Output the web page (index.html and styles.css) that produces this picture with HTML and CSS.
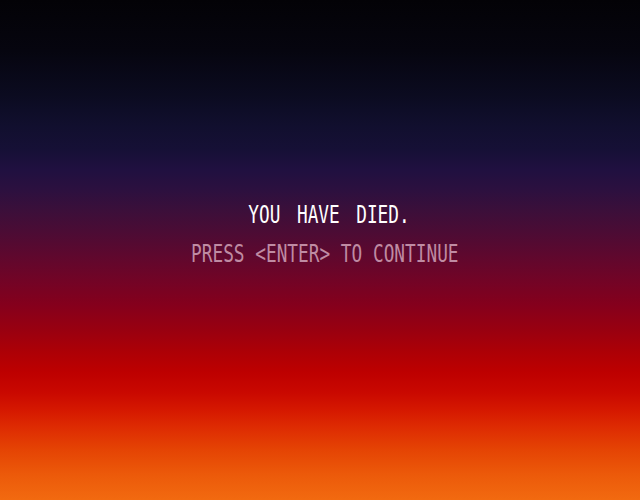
FILE: index.html
```html
<!DOCTYPE html>
<html lang="en">
<head>
<meta charset="utf-8">
<title>You have died</title>
<link rel="stylesheet" href="styles.css">
</head>
<body>
<main class="screen">
  <div class="messages">
    <p class="title">YOU HAVE DIED.</p>
    <p class="prompt">PRESS &lt;ENTER&gt; TO CONTINUE</p>
  </div>
</main>
</body>
</html>
```
FILE: styles.css
```css
html, body {
  margin: 0;
  padding: 0;
  width: 100%;
  height: 100%;
}

body {
  background: #000;
}

.screen {
  width: 640px;
  height: 500px;
  display: flex;
  align-items: center;
  justify-content: center;
  background:
    linear-gradient(to bottom,
      #030206 0px,
      #06050f 50px,
      #0b0b20 95px,
      #110f2e 125px,
      #161036 150px,
      #201040 170px,
      #2c103f 190px,
      #3b0f3a 210px,
      #4a0c35 230px,
      #5e082e 255px,
      #720426 280px,
      #85001c 305px,
      #990010 330px,
      #ad0006 352px,
      #bd0000 372px,
      #c90800 392px,
      #d51800 410px,
      #de2c02 428px,
      #e54404 450px,
      #ec5a0a 475px,
      #f26a10 500px);
}

.messages {
  display: flex;
  flex-direction: column;
  align-items: center;
  gap: 14px;
  padding-bottom: 32px;
  padding-left: 10px;
}

.title,
.prompt {
  margin: 0;
  display: inline-block;
  font-family: "DejaVu Sans Mono", "Liberation Mono", monospace;
  font-size: 24.7px;
  line-height: 25px;
  white-space: pre;
  transform-origin: center;
}

.title {
  color: #ffffff;
  word-spacing: 8px;
  transform: translateX(4px) scaleX(0.72);
}

.prompt {
  color: #bf8ba3;
  transform: scaleX(0.72);
}
```
